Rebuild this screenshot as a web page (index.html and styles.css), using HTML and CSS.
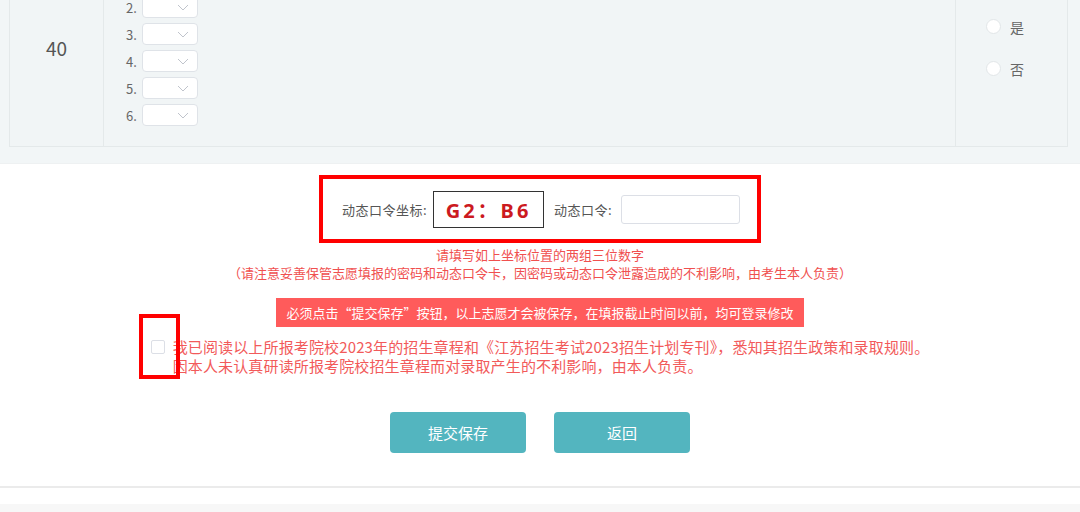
FILE: index.html
```html
<!DOCTYPE html>
<html lang="zh-CN">
<head>
<meta charset="utf-8">
<title>志愿填报</title>
<link rel="stylesheet" href="styles.css">
</head>
<body>
<div class="top">
  <div class="tbl">
    <div class="cell num">40</div>
    <div class="cell choices">
      <ul class="sel-list">
        <li><span class="idx">1.</span><span class="sel"><svg class="chev" viewBox="0 0 12 7" width="12" height="7"><path d="M1 1 L6 6 L11 1" fill="none" stroke="#c0c4cc" stroke-width="1"/></svg></span></li>
        <li><span class="idx">2.</span><span class="sel"><svg class="chev" viewBox="0 0 12 7" width="12" height="7"><path d="M1 1 L6 6 L11 1" fill="none" stroke="#c0c4cc" stroke-width="1"/></svg></span></li>
        <li><span class="idx">3.</span><span class="sel"><svg class="chev" viewBox="0 0 12 7" width="12" height="7"><path d="M1 1 L6 6 L11 1" fill="none" stroke="#c0c4cc" stroke-width="1"/></svg></span></li>
        <li><span class="idx">4.</span><span class="sel"><svg class="chev" viewBox="0 0 12 7" width="12" height="7"><path d="M1 1 L6 6 L11 1" fill="none" stroke="#c0c4cc" stroke-width="1"/></svg></span></li>
        <li><span class="idx">5.</span><span class="sel"><svg class="chev" viewBox="0 0 12 7" width="12" height="7"><path d="M1 1 L6 6 L11 1" fill="none" stroke="#c0c4cc" stroke-width="1"/></svg></span></li>
        <li><span class="idx">6.</span><span class="sel"><svg class="chev" viewBox="0 0 12 7" width="12" height="7"><path d="M1 1 L6 6 L11 1" fill="none" stroke="#c0c4cc" stroke-width="1"/></svg></span></li>
      </ul>
    </div>
    <div class="cell radios">
      <label class="radio"><span class="dot"></span>是</label>
      <label class="radio"><span class="dot"></span>否</label>
    </div>
  </div>
</div>

<div class="main">
  <div class="code-box">
    <span class="lbl lbl-first">动态口令坐标:</span>
    <span class="code">G2：B6</span>
    <span class="lbl lbl-second">动态口令:</span>
    <span class="pwd"></span>
  </div>
  <div class="hint">
    <div>请填写如上坐标位置的两组三位数字</div>
    <div>（请注意妥善保管志愿填报的密码和动态口令卡，因密码或动态口令泄露造成的不利影响，由考生本人负责）</div>
  </div>
  <div class="banner">必须点击“提交保存”按钮，以上志愿才会被保存，在填报截止时间以前，均可登录修改</div>
  <div class="agree">
    <span class="chk-wrap"><span class="chk"></span><span class="mark"></span></span>
    <div class="agree-text">我已阅读以上所报考院校2023年的招生章程和《江苏招生考试2023招生计划专刊》，悉知其招生政策和录取规则。<br>因本人未认真研读所报考院校招生章程而对录取产生的不利影响，由本人负责。</div>
  </div>
  <div class="btns">
    <span class="btn">提交保存</span>
    <span class="btn">返回</span>
  </div>
</div>
<div class="footer"></div>
<div class="page-bottom"></div>
</body>
</html>
```

FILE: styles.css
```css
* { box-sizing: border-box; }
html, body { margin: 0; padding: 0; background: #fff; }
body {
  font-family: "Noto Sans CJK SC", "Noto Sans", sans-serif;
  color: #555;
  overflow: hidden;
}

.top {
  background: #f2f6f7;
  margin-top: -52px;
  padding: 0 12px 16px 9px;
  border-bottom: 1px solid #eef1f2;
}
.tbl {
  display: grid;
  grid-template-columns: 93px 1fr 112px;
  border: 1px solid #e4e9ea;
  background: #f1f5f6;
}
.cell {
  display: flex;
  align-items: center;
}
.cell + .cell { border-left: 1px solid #e4e9ea; }
.num {
  justify-content: center;
  font-size: 19px;
  color: #555;
}
.choices { padding: 20px 0 20px 22px; }
.sel-list {
  list-style: none;
  margin: 0;
  padding: 0;
  display: flex;
  flex-direction: column;
  gap: 5px;
}
.sel-list li {
  display: flex;
  align-items: center;
  height: 22px;
}
.idx {
  width: 16px;
  font-size: 13px;
  color: #666;
}
.sel {
  position: relative;
  width: 56px;
  height: 22px;
  background: #fff;
  border: 1px solid #dfe3e8;
  border-radius: 4px;
  display: flex;
  align-items: center;
  justify-content: flex-end;
  padding-right: 8px;
}
.radios {
  flex-direction: column;
  align-items: flex-start;
  justify-content: center;
  gap: 20px;
  padding-left: 30px;
}
.radio {
  display: flex;
  align-items: center;
  gap: 9px;
  font-size: 14px;
  color: #666;
  line-height: 22px;
}
.dot {
  width: 15px;
  height: 15px;
  border-radius: 50%;
  background: #fff;
  border: 1px solid #e2e6e8;
}

.main { padding-top: 11px; }
.code-box {
  width: fit-content;
  margin: 0 auto;
  height: 68px;
  border: 4px solid #f00;
  display: flex;
  align-items: center;
  padding: 0 17px 0 19px;
}
.lbl { font-size: 13px; color: #555; letter-spacing: 0.5px; }
.lbl-first { margin-right: 6px; }
.lbl-second { margin: 0 9px 0 10px; }
.code {
  width: 111px;
  height: 37px;
  border: 1px solid #333;
  background: #fff;
  color: #cc1a1f;
  font-family: "Noto Sans", "Noto Sans CJK SC", sans-serif;
  font-weight: bold;
  font-size: 20px;
  letter-spacing: 3px;
  display: flex;
  align-items: center;
  justify-content: center;
}
.pwd {
  width: 119px;
  height: 29px;
  border: 1px solid #dcdfe6;
  border-radius: 3px;
  background: #fff;
}
.hint {
  margin-top: 3px;
  text-align: center;
  font-size: 13px;
  line-height: 18px;
  color: #f0504f;
}
.banner {
  width: fit-content;
  margin: 16px auto 0;
  height: 29px;
  line-height: 29px;
  padding: 0 10px;
  background: #ff5b5b;
  color: #fff;
  font-size: 13px;
}
.agree {
  margin-top: 10px;
  display: flex;
  justify-content: center;
  align-items: flex-start;
  gap: 8px;
}
.chk-wrap {
  position: relative;
  margin-top: 3px;
  width: 14px;
  height: 14px;
  flex: none;
}
.chk {
  display: block;
  width: 14px;
  height: 14px;
  background: #fff;
  border: 1px solid #dcdfe6;
  border-radius: 2px;
}
.mark {
  position: absolute;
  left: -12px;
  top: -26px;
  width: 41px;
  height: 65px;
  border: 4px solid #f00;
}
.agree-text {
  font-size: 15px;
  line-height: 19px;
  letter-spacing: 0.14px;
  color: #f25a5a;
}
.btns {
  margin-top: 37px;
  display: flex;
  justify-content: center;
  gap: 28px;
}
.btn {
  width: 136px;
  height: 41px;
  border-radius: 4px;
  background: #53b5bf;
  color: #fff;
  font-size: 15px;
  display: flex;
  align-items: center;
  justify-content: center;
}
.footer {
  margin-top: 33px;
  height: 18px;
  border-top: 2px solid #ebebeb;
}
.page-bottom {
  height: 20px;
  background: #f7f7f7;
}
```
